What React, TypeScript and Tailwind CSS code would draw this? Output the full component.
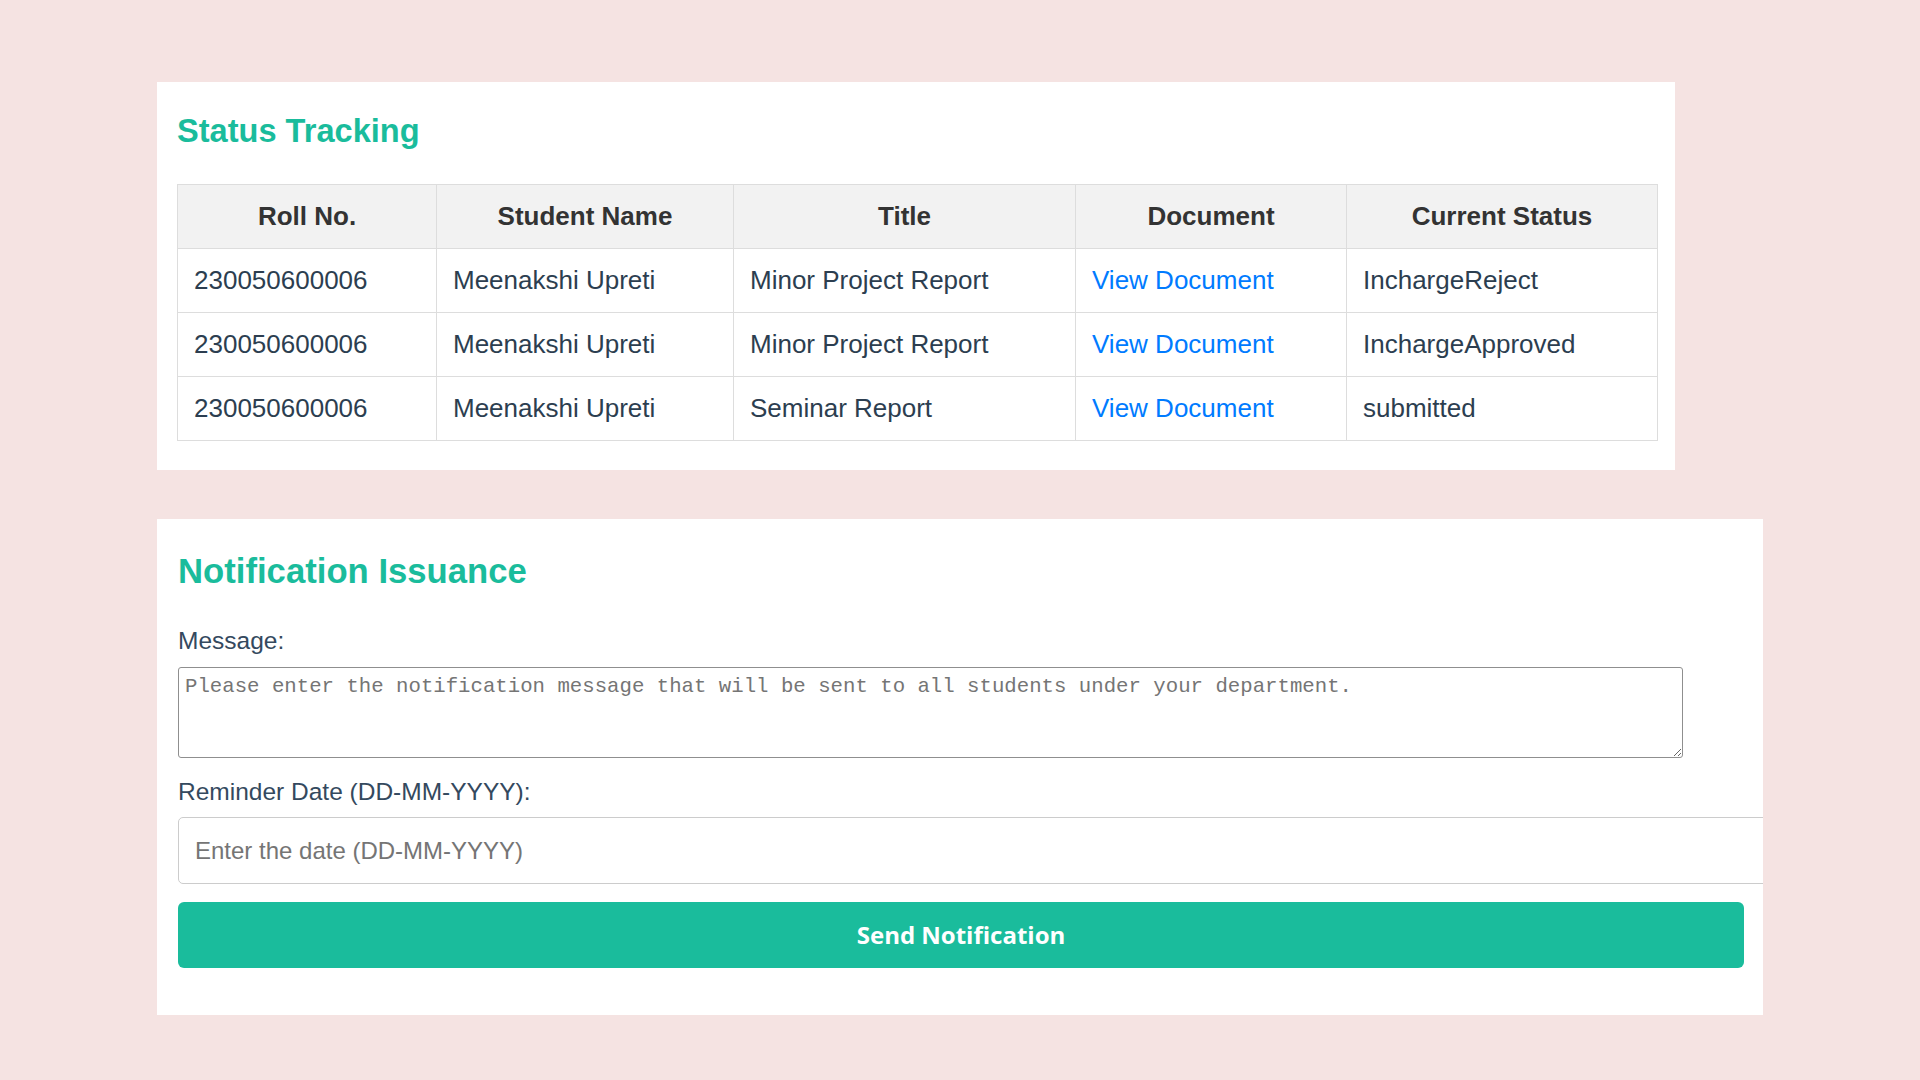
import { useState } from "react";

type Submission = {
  roll: string;
  name: string;
  title: string;
  status: string;
};

const submissions: Submission[] = [
  { roll: "230050600006", name: "Meenakshi Upreti", title: "Minor Project Report", status: "InchargeReject" },
  { roll: "230050600006", name: "Meenakshi Upreti", title: "Minor Project Report", status: "InchargeApproved" },
  { roll: "230050600006", name: "Meenakshi Upreti", title: "Seminar Report", status: "submitted" },
];

function StatusTracking() {
  return (
    <section className="w-[1518px] bg-white pb-[29px] pl-[20px] pt-[29px]">
      <h2 className="text-[32.6px] font-bold leading-[40px] text-[#1abc9c]">Status Tracking</h2>

      <table className="mt-[33px] w-[1480px] table-fixed border-collapse border border-[#dddddd] text-[26px] leading-[31px]">
        <thead>
          <tr className="bg-[#f2f2f2] text-[#333333]">
            <th className="w-[259px] border border-[#dddddd] px-4 py-4 text-center font-bold">Roll No.</th>
            <th className="w-[297px] border border-[#dddddd] px-4 py-4 text-center font-bold">Student Name</th>
            <th className="w-[342px] border border-[#dddddd] px-4 py-4 text-center font-bold">Title</th>
            <th className="w-[271px] border border-[#dddddd] px-4 py-4 text-center font-bold">Document</th>
            <th className="w-[311px] border border-[#dddddd] px-4 py-4 text-center font-bold">Current Status</th>
          </tr>
        </thead>
        <tbody className="text-[#2c3e50]">
          {submissions.map((s, i) => (
            <tr key={i}>
              <td className="border border-[#dddddd] px-4 py-4">{s.roll}</td>
              <td className="border border-[#dddddd] px-4 py-4">{s.name}</td>
              <td className="border border-[#dddddd] px-4 py-4">{s.title}</td>
              <td className="border border-[#dddddd] px-4 py-4">
                <a href="#" className="text-[#007bff]">
                  View Document
                </a>
              </td>
              <td className="border border-[#dddddd] px-4 py-4">{s.status}</td>
            </tr>
          ))}
        </tbody>
      </table>
    </section>
  );
}

function NotificationIssuance() {
  const [message, setMessage] = useState("");
  const [date, setDate] = useState("");

  return (
    <section className="mt-[49px] w-[1606px] overflow-hidden bg-white pb-[47px] pl-[21px] pt-[32px]">
      <h2 className="text-[34.7px] font-bold leading-[40px] text-[#1abc9c]">Notification Issuance</h2>

      <label className="mt-[36px] block text-[24.5px] leading-[28px] text-[#34495e]">Message:</label>
      <textarea
        value={message}
        onChange={(e) => setMessage(e.target.value)}
        placeholder="Please enter the notification message that will be sent to all students under your department."
        className="mt-[12px] block h-[91px] w-[1505px] resize rounded-[3px] border border-[#8f8f8f] px-[6px] pt-[3px] font-['Liberation_Mono',monospace] text-[20.7px] placeholder:text-[#757575]"
      />

      <label className="mt-[20px] block text-[24.5px] leading-[28px] text-[#34495e]">Reminder Date (DD-MM-YYYY):</label>
      <input
        value={date}
        onChange={(e) => setDate(e.target.value)}
        placeholder="Enter the date (DD-MM-YYYY)"
        className="mt-[11px] block h-[67px] w-[1600px] rounded-[5px] border border-[#cccccc] px-4 text-[24px] placeholder:text-[#757575]"
      />

      <button className="mt-[18px] block h-[66px] w-[1566px] rounded-[6px] bg-[#1abc9c] font-['Open_Sans',sans-serif] text-[24px] font-bold text-white">
        Send Notification
      </button>
    </section>
  );
}

export default function App() {
  return (
    <div className="min-h-screen bg-[#f5e3e2] pl-[157px] pt-[82px] font-['Liberation_Sans',Arial,sans-serif]">
      <StatusTracking />
      <NotificationIssuance />
    </div>
  );
}
